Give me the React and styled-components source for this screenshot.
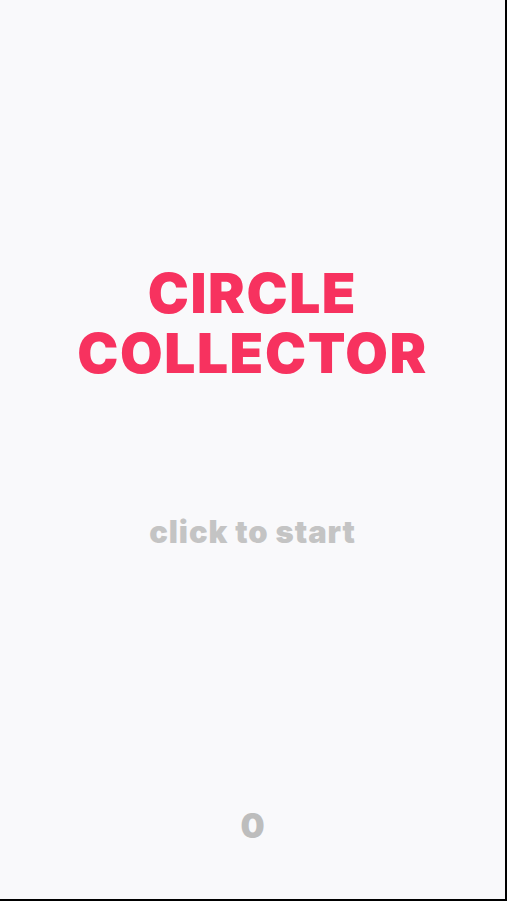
import React from "react";
import styled, { createGlobalStyle } from "styled-components";

const Global = createGlobalStyle`
  html, body {
    margin: 0;
    padding: 0;
    background: #f9f9fb;
  }
  #root {
    height: 100vh;
  }
`;

const Screen = styled.div`
  box-sizing: border-box;
  height: 100vh;
  width: 100%;
  background: #f9f9fb;
  border-right: 2px solid #000;
  border-bottom: 2px solid #000;
  display: flex;
  flex-direction: column;
  align-items: center;
  font-family: Inter, "Noto Sans", sans-serif;
  user-select: none;
`;

const Title = styled.h1`
  margin: 263px 0 0;
  color: #f7325f;
  font-size: 55px;
  font-weight: 900;
  line-height: 60px;
  text-align: center;
  letter-spacing: 1.6px;
`;

const Hint = styled.div`
  margin-top: 130px;
  color: #c4c4c4;
  font-size: 31px;
  font-weight: 900;
  letter-spacing: 0.9px;
`;

const Score = styled.div`
  margin-top: auto;
  margin-bottom: 53px;
  color: #bdbdbd;
  font-size: 34px;
  font-weight: 900;
`;

export default function App() {
  return (
    <>
      <Global />
      <Screen>
        <Title>
          CIRCLE
          <br />
          COLLECTOR
        </Title>
        <Hint>click to start</Hint>
        <Score>0</Score>
      </Screen>
    </>
  );
}
